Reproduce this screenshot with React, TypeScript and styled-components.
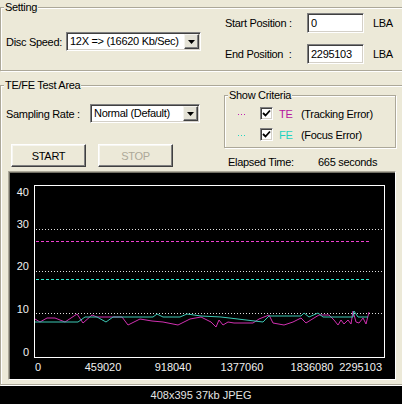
import styled, { createGlobalStyle } from "styled-components";

const GlobalStyle = createGlobalStyle`
  html, body {
    margin: 0;
    padding: 0;
    background: #000;
  }
  body {
    font-family: "Liberation Sans", Arial, sans-serif;
  }
`;

// chart data, in page pixels (the svg viewBox matches the page)
const cyanTrace = [
  [35, 322], [78, 322], [85, 317], [97, 317], [106, 322], [113, 317], [153, 317],
  [157, 314], [163, 317], [180, 317], [187, 314], [201, 316], [221, 317], [263, 322],
  [269, 316], [301, 316], [304, 313], [309, 317], [318, 313], [323, 317], [353, 317],
  [354, 311], [358, 317], [368, 317],
];

const magentaTrace = [
  [35, 319], [40, 322], [47, 318], [55, 318], [65, 322], [77, 314], [83, 323], [92, 315],
  [97, 317], [107, 317], [122, 317], [128, 325], [140, 319], [152, 321], [163, 322],
  [178, 325], [190, 319], [201, 317], [211, 322], [216, 327], [219, 320], [223, 325],
  [228, 322], [234, 323], [253, 323], [259, 319], [269, 315], [273, 323], [284, 325],
  [293, 322], [301, 318], [306, 323], [314, 318], [319, 315], [329, 315], [334, 320],
  [338, 325], [341, 320], [344, 324], [348, 320], [351, 324], [353, 311], [356, 322],
  [359, 323], [363, 318], [366, 324], [369, 312],
];

const yLabels = [
  { text: "40", y: 196 },
  { text: "30", y: 228 },
  { text: "20", y: 270 },
  { text: "10", y: 313 },
  { text: "0", y: 356 },
];

const xLabels = [
  { text: "0", x: 35, anchor: "start" },
  { text: "459020", x: 103, anchor: "middle" },
  { text: "918040", x: 173, anchor: "middle" },
  { text: "1377060", x: 242, anchor: "middle" },
  { text: "1836080", x: 312, anchor: "middle" },
  { text: "2295103", x: 382, anchor: "end" },
];

const toPoints = (pts: number[][]) => pts.map(([x, y]) => `${x},${y}`).join(" ");

const ComboBox = ({ value, width }: { value: string; width: number }) => (
  <Field $width={width}>
    <FieldText>{value}</FieldText>
    <DropButton>
      <svg width="7" height="4" viewBox="0 0 7 4">
        <path d="M0 0h7L3.5 4z" fill="#000" />
      </svg>
    </DropButton>
  </Field>
);

const CheckBox = () => (
  <Check>
    <svg width="9" height="9" viewBox="0 0 9 9">
      <path d="M1 4 L3.5 6.5 L8 1.5" stroke="#000" strokeWidth="1.8" fill="none" />
    </svg>
  </Check>
);

export default function App() {
  return (
    <Page>
      <GlobalStyle />
      <Dialog>
        <SettingGroup>
          <Legend>Setting</Legend>
          <SettingLeft>
            <Label $width={60}>Disc Speed:</Label>
            <ComboBox value="12X => (16620 Kb/Sec)" width={135} />
          </SettingLeft>
          <PositionCol>
            <PositionRow>
              <Label $width={82}>Start Position :</Label>
              <InputBox>0</InputBox>
              <Unit>LBA</Unit>
            </PositionRow>
            <PositionRow>
              <Label $width={82}>End Position&nbsp; :</Label>
              <InputBox>2295103</InputBox>
              <Unit>LBA</Unit>
            </PositionRow>
          </PositionCol>
        </SettingGroup>

        <TestGroup>
          <Legend>TE/FE Test Area</Legend>
          <TopArea>
            <TestLeft>
              <SamplingRow>
                <Label $width={84}>Sampling Rate :</Label>
                <ComboBox value="Normal (Default)" width={110} />
              </SamplingRow>
              <ButtonRow>
                <Button>START</Button>
                <Button $disabled>STOP</Button>
              </ButtonRow>
            </TestLeft>
            <TestRight>
              <CriteriaGroup>
                <Legend>Show Criteria</Legend>
                <CriteriaRow>
                  <Dots $color="#c026b0" />
                  <CheckBox />
                  <Abbrev $color="#b5179e">TE</Abbrev>
                  <span>(Tracking Error)</span>
                </CriteriaRow>
                <CriteriaRow>
                  <Dots $color="#22d6c2" />
                  <CheckBox />
                  <Abbrev $color="#1ed2c0">FE</Abbrev>
                  <span>(Focus Error)</span>
                </CriteriaRow>
              </CriteriaGroup>
              <ElapsedRow>
                <Label $width={90}>Elapsed Time:</Label>
                <span>665 seconds</span>
              </ElapsedRow>
            </TestRight>
          </TopArea>

          <ChartPanel>
            <ChartSvg width={384} height={205} viewBox="10 173 384 205">
              <rect x={34.5} y={185.5} width={350} height={172} fill="none" stroke="#fff" />
              {[229, 271, 313].map((y) => (
                <line key={y} x1={36} x2={383} y1={y + 0.5} y2={y + 0.5} stroke="#e0e0e0" strokeDasharray="1 2" />
              ))}
              <line x1={36} x2={371} y1={241.5} y2={241.5} stroke="#f040d0" strokeDasharray="3 2" />
              <line x1={36} x2={371} y1={279.5} y2={279.5} stroke="#30e8cc" strokeDasharray="3 2" />
              <polyline points={toPoints(magentaTrace)} fill="none" stroke="#d030b0" />
              <polyline points={toPoints(cyanTrace)} fill="none" stroke="#3cc8b4" />
              {yLabels.map((l) => (
                <AxisText key={l.text} x={29} y={l.y} textAnchor="end">
                  {l.text}
                </AxisText>
              ))}
              {xLabels.map((l) => (
                <AxisText key={l.text} x={l.x} y={371} textAnchor={l.anchor as "start" | "middle" | "end"}>
                  {l.text}
                </AxisText>
              ))}
            </ChartSvg>
          </ChartPanel>
        </TestGroup>
      </Dialog>
      <Caption>408x395 37kb JPEG</Caption>
    </Page>
  );
}

const Page = styled.div`
  width: 402px;
  height: 404px;
  overflow: hidden;
  display: flex;
  flex-direction: column;
  background: #000;
`;

const Dialog = styled.div`
  height: 386px;
  flex: none;
  overflow: hidden;
  background: #ece9d8;
  color: #000;
  font-family: "Liberation Sans", Arial, sans-serif;
  font-size: 11px;
  letter-spacing: -0.3px;
`;

const Caption = styled.div`
  flex: 1;
  display: flex;
  align-items: center;
  justify-content: center;
  color: #e4e4e4;
  font-family: "Liberation Sans", Arial, sans-serif;
  font-size: 11px;
`;

const GroupBox = styled.div`
  position: relative;
  box-sizing: border-box;
  border: 1px solid #aca899;
  box-shadow: inset 1px 1px 0 #fff, 1px 1px 0 #fff;
`;

const Legend = styled.span`
  position: absolute;
  top: -8px;
  left: 3px;
  padding: 0 1px;
  line-height: 14px;
  background: #ece9d8;
`;

const SettingGroup = styled(GroupBox)`
  margin-top: 7px;
  width: 440px;
  height: 64px;
  padding: 5px 0 0 5px;
  display: flex;
  align-items: center;
`;

const SettingLeft = styled.div`
  display: flex;
  align-items: center;
`;

const Label = styled.span<{ $width: number }>`
  flex: none;
  width: ${({ $width }) => $width}px;
  white-space: nowrap;
`;

const Field = styled.div<{ $width: number }>`
  box-sizing: border-box;
  width: ${({ $width }) => $width}px;
  height: 19px;
  display: flex;
  align-items: stretch;
  background: #fff;
  border: 1px solid;
  border-color: #808080 #fff #fff #808080;
  box-shadow: inset 1px 1px 0 #404040, inset -1px -1px 0 #d4d0c8;
  padding: 1px;
`;

const FieldText = styled.span`
  flex: 1;
  padding-left: 2px;
  line-height: 15px;
  white-space: nowrap;
  overflow: hidden;
`;

const DropButton = styled.span`
  flex: none;
  width: 15px;
  box-sizing: border-box;
  display: flex;
  align-items: center;
  justify-content: center;
  background: #e4e2d6;
  border: 1px solid;
  border-color: #f4f3ee #404040 #404040 #f4f3ee;
  box-shadow: inset -1px -1px 0 #808080;
`;

const PositionCol = styled.div`
  margin-left: 24px;
  display: flex;
  flex-direction: column;
  gap: 11px;
  align-self: flex-start;
`;

const PositionRow = styled.div`
  display: flex;
  align-items: center;
  height: 20px;
`;

const InputBox = styled.div`
  box-sizing: border-box;
  width: 57px;
  height: 20px;
  background: #fff;
  border: 1px solid;
  border-color: #808080 #fff #fff #808080;
  box-shadow: inset 1px 1px 0 #404040, inset -1px -1px 0 #d4d0c8;
  padding: 2px 3px;
  line-height: 14px;
`;

const Unit = styled.span`
  margin-left: 9px;
`;

const TestGroup = styled(GroupBox)`
  margin-top: 14px;
  width: 440px;
  height: 300px;
  padding: 0 0 0 5px;
`;

const TopArea = styled.div`
  display: flex;
  align-items: flex-start;
`;

const TestLeft = styled.div`
  width: 218px;
  display: flex;
  flex-direction: column;
`;

const SamplingRow = styled.div`
  margin-top: 18px;
  display: flex;
  align-items: center;
`;

const ButtonRow = styled.div`
  margin-top: 21px;
  margin-left: 5px;
  display: flex;
  gap: 12px;
`;

const Button = styled.div<{ $disabled?: boolean }>`
  box-sizing: border-box;
  width: 75px;
  height: 23px;
  display: flex;
  align-items: center;
  justify-content: center;
  background: #ece9d8;
  color: ${({ $disabled }) => ($disabled ? "#aca899" : "#000")};
  border: 1px solid;
  border-color: #fff #404040 #404040 #fff;
  box-shadow: inset -1px -1px 0 #808080, inset 1px 1px 0 #f7f6f0;
`;

const TestRight = styled.div`
  display: flex;
  flex-direction: column;
`;

const CriteriaGroup = styled(GroupBox)`
  margin-top: 9px;
  width: 172px;
  padding: 11px 0 6px 13px;
  display: flex;
  flex-direction: column;
  gap: 8px;
`;

const CriteriaRow = styled.div`
  display: flex;
  align-items: center;
  height: 13px;
  white-space: nowrap;
`;

const Dots = styled.span<{ $color: string }>`
  flex: none;
  width: 9px;
  height: 1px;
  margin: 2px 13px 0 0;
  background: repeating-linear-gradient(
    to right,
    ${({ $color }) => $color} 0 1px,
    transparent 1px 3px
  );
`;

const Check = styled.span`
  box-sizing: border-box;
  width: 13px;
  height: 13px;
  display: flex;
  align-items: center;
  justify-content: center;
  background: #fff;
  border: 1px solid;
  border-color: #808080 #fff #fff #808080;
  box-shadow: inset 1px 1px 0 #404040, inset -1px -1px 0 #d4d0c8;
`;

const Abbrev = styled.span<{ $color: string }>`
  width: 22px;
  margin-left: 6px;
  color: ${({ $color }) => $color};
`;

const ElapsedRow = styled.div`
  margin-top: 7px;
  padding-left: 4px;
  height: 13px;
  display: flex;
  align-items: center;
`;

const ChartPanel = styled.div`
  margin-top: 3px;
  margin-left: 2px;
  box-sizing: border-box;
  width: 388px;
  height: 209px;
  background: #000;
  border: 1px solid;
  border-color: #aca899 #fff #fff #aca899;
  box-shadow: inset 1px 1px 0 #716f64;
  padding: 1px;
`;

const ChartSvg = styled.svg`
  display: block;
  letter-spacing: 0;
`;

const AxisText = styled.text`
  fill: #f0f0f0;
  font-family: "Liberation Sans", Arial, sans-serif;
  font-size: 11px;
`;
